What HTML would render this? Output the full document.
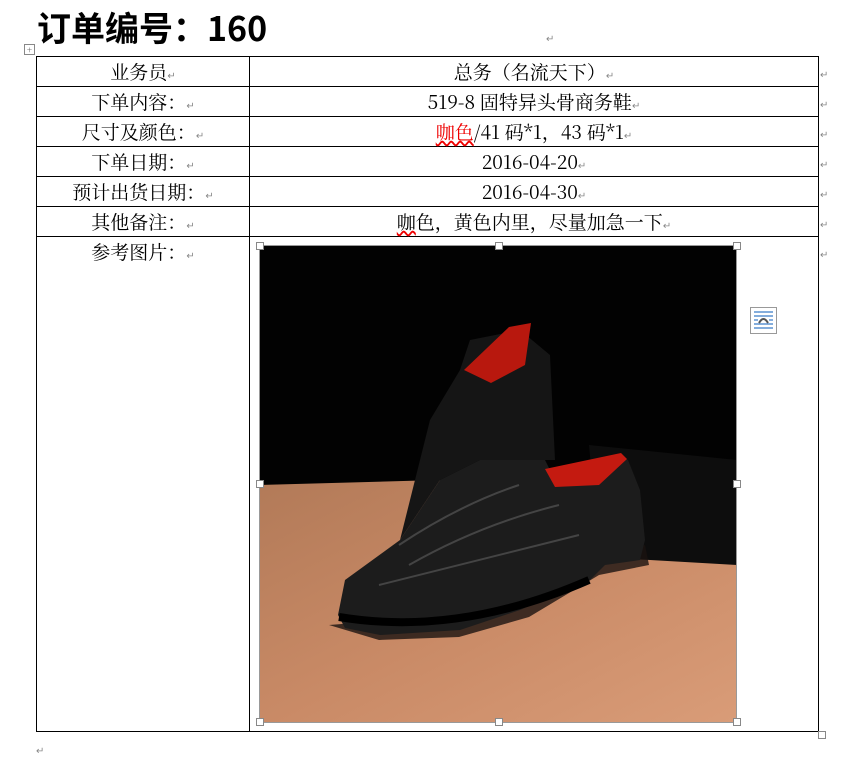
<!DOCTYPE html>
<html><head><meta charset="utf-8"><style>
body{margin:0;background:#fff;width:844px;height:763px;position:relative;overflow:hidden;font-family:"Noto Serif CJK SC","Liberation Serif",serif;}
.t{position:absolute;left:37px;top:4px;font:bold 34px "Noto Sans CJK SC","Liberation Sans",sans-serif;line-height:46px;color:#000}
.h{position:absolute;background:#000}
.c{position:absolute;font-size:19px;line-height:30px;text-align:center;color:#000;white-space:nowrap}
.m{font-size:10px;color:#888}
.sq{position:absolute;width:6px;height:6px;border:1px solid #888;background:#fff}
</style></head><body>
<div class="t">订单编号：160</div>
<div style="position:absolute;left:24px;top:44px;width:9px;height:9px;border:1px solid #888;font-size:9px;line-height:9px;text-align:center;color:#555">+</div>
<div class="h" style="left:36px;top:56px;width:783px;height:1px"></div>
<div class="h" style="left:36px;top:86px;width:783px;height:1px"></div>
<div class="h" style="left:36px;top:116px;width:783px;height:1px"></div>
<div class="h" style="left:36px;top:146px;width:783px;height:1px"></div>
<div class="h" style="left:36px;top:176px;width:783px;height:1px"></div>
<div class="h" style="left:36px;top:206px;width:783px;height:1px"></div>
<div class="h" style="left:36px;top:236px;width:783px;height:1px"></div>
<div class="h" style="left:36px;top:731px;width:783px;height:1px"></div>
<div class="h" style="left:36px;top:56px;width:1px;height:676px"></div>
<div class="h" style="left:249px;top:56px;width:1px;height:676px"></div>
<div class="h" style="left:818px;top:56px;width:1px;height:676px"></div>
<div class="c" style="left:37px;width:212px;top:57px">业务员<span class="m">↵</span></div>
<div class="c" style="left:37px;width:212px;top:87px">下单内容：<span class="m">↵</span></div>
<div class="c" style="left:37px;width:212px;top:117px">尺寸及颜色：<span class="m">↵</span></div>
<div class="c" style="left:37px;width:212px;top:147px">下单日期：<span class="m">↵</span></div>
<div class="c" style="left:37px;width:212px;top:177px">预计出货日期：<span class="m">↵</span></div>
<div class="c" style="left:37px;width:212px;top:207px">其他备注：<span class="m">↵</span></div>
<div class="c" style="left:37px;width:212px;top:237px">参考图片：<span class="m">↵</span></div>
<div class="c" style="left:250px;width:568px;top:57px">总务（名流天下）<span class="m">↵</span></div>
<div class="c" style="left:250px;width:568px;top:87px">519-8 固特异头骨商务鞋<span class="m">↵</span></div>
<div class="c" style="left:250px;width:568px;top:117px"><span style="color:#e00;text-decoration:underline wavy #e00">咖色</span>/41 码*1，43 码*1<span class="m">↵</span></div>
<div class="c" style="left:250px;width:568px;top:147px">2016-04-20<span class="m">↵</span></div>
<div class="c" style="left:250px;width:568px;top:177px">2016-04-30<span class="m">↵</span></div>
<div class="c" style="left:250px;width:568px;top:207px"><span style="text-decoration:underline wavy #e00">咖</span>色，黄色内里，尽量加急一下<span class="m">↵</span></div>
<div class="m" style="position:absolute;left:546px;top:30px">↵</div>
<div class="m" style="position:absolute;left:820px;top:66px">↵</div>
<div class="m" style="position:absolute;left:820px;top:96px">↵</div>
<div class="m" style="position:absolute;left:820px;top:126px">↵</div>
<div class="m" style="position:absolute;left:820px;top:156px">↵</div>
<div class="m" style="position:absolute;left:820px;top:186px">↵</div>
<div class="m" style="position:absolute;left:820px;top:216px">↵</div>
<div class="m" style="position:absolute;left:820px;top:246px">↵</div>
<div class="m" style="position:absolute;left:36px;top:742px">↵</div>
<svg style="position:absolute;left:259px;top:245px" width="478" height="478" viewBox="0 0 478 478">
<defs><linearGradient id="f" x1="0" y1="0" x2="1" y2="1"><stop offset="0" stop-color="#b27a58"/><stop offset="0.5" stop-color="#c98a66"/><stop offset="1" stop-color="#d99c78"/></linearGradient></defs>
<rect width="478" height="478" fill="#020202"/>
<polygon points="0,240 180,235 300,280 380,312 478,318 478,478 0,478" fill="url(#f)"/>
<polygon points="330,200 478,215 478,320 340,312" fill="#0d0d0d"/>
<polygon points="70,380 120,395 200,392 270,372 340,330 390,320 386,300 300,330 200,370" fill="#1a1310" opacity="0.8"/>
<polygon points="141,295 171,175 201,125 211,95 261,85 291,110 296,215 221,215 181,235" fill="#151515"/>
<polygon points="205,125 250,82 272,78 266,120 232,138" fill="#b8180e"/>
<polygon points="79,370 86,335 141,295 181,235 221,215 286,215 291,225 361,210 369,215 381,245 386,295 381,315 346,320 331,335 261,365 201,385 121,390 86,383" fill="#1c1c1c"/>
<polygon points="286,224 362,208 368,214 340,240 296,242" fill="#c41a10"/>
<path d="M80,372 Q200,392 330,335" stroke="#000" stroke-width="8" fill="none"/>
<path d="M140,300 Q200,260 260,240 M150,320 Q220,280 300,260 M120,340 Q200,320 320,290" stroke="#444" stroke-width="2" fill="none"/>
<rect x="0.5" y="0.5" width="477" height="477" fill="none" stroke="#999"/>
</svg>
<div class="sq" style="left:256px;top:242px"></div>
<div class="sq" style="left:495px;top:242px"></div>
<div class="sq" style="left:733px;top:242px"></div>
<div class="sq" style="left:256px;top:480px"></div>
<div class="sq" style="left:733px;top:480px"></div>
<div class="sq" style="left:256px;top:718px"></div>
<div class="sq" style="left:495px;top:718px"></div>
<div class="sq" style="left:733px;top:718px"></div>
<div class="sq" style="left:818px;top:731px"></div>
<svg style="position:absolute;left:750px;top:307px" width="28" height="28"><rect x="0.5" y="0.5" width="26" height="26" fill="#fff" stroke="#999"/><g stroke="#3a7cc8" stroke-width="1.2"><line x1="4" y1="5" x2="23" y2="5"/><line x1="4" y1="9" x2="23" y2="9"/><line x1="4" y1="13" x2="8" y2="13"/><line x1="19" y1="13" x2="23" y2="13"/><line x1="4" y1="17" x2="23" y2="17"/><line x1="4" y1="21" x2="23" y2="21"/></g><path d="M9,16 Q13.5,8 18,16" stroke="#555" stroke-width="2" fill="none"/></svg>
</body></html>
